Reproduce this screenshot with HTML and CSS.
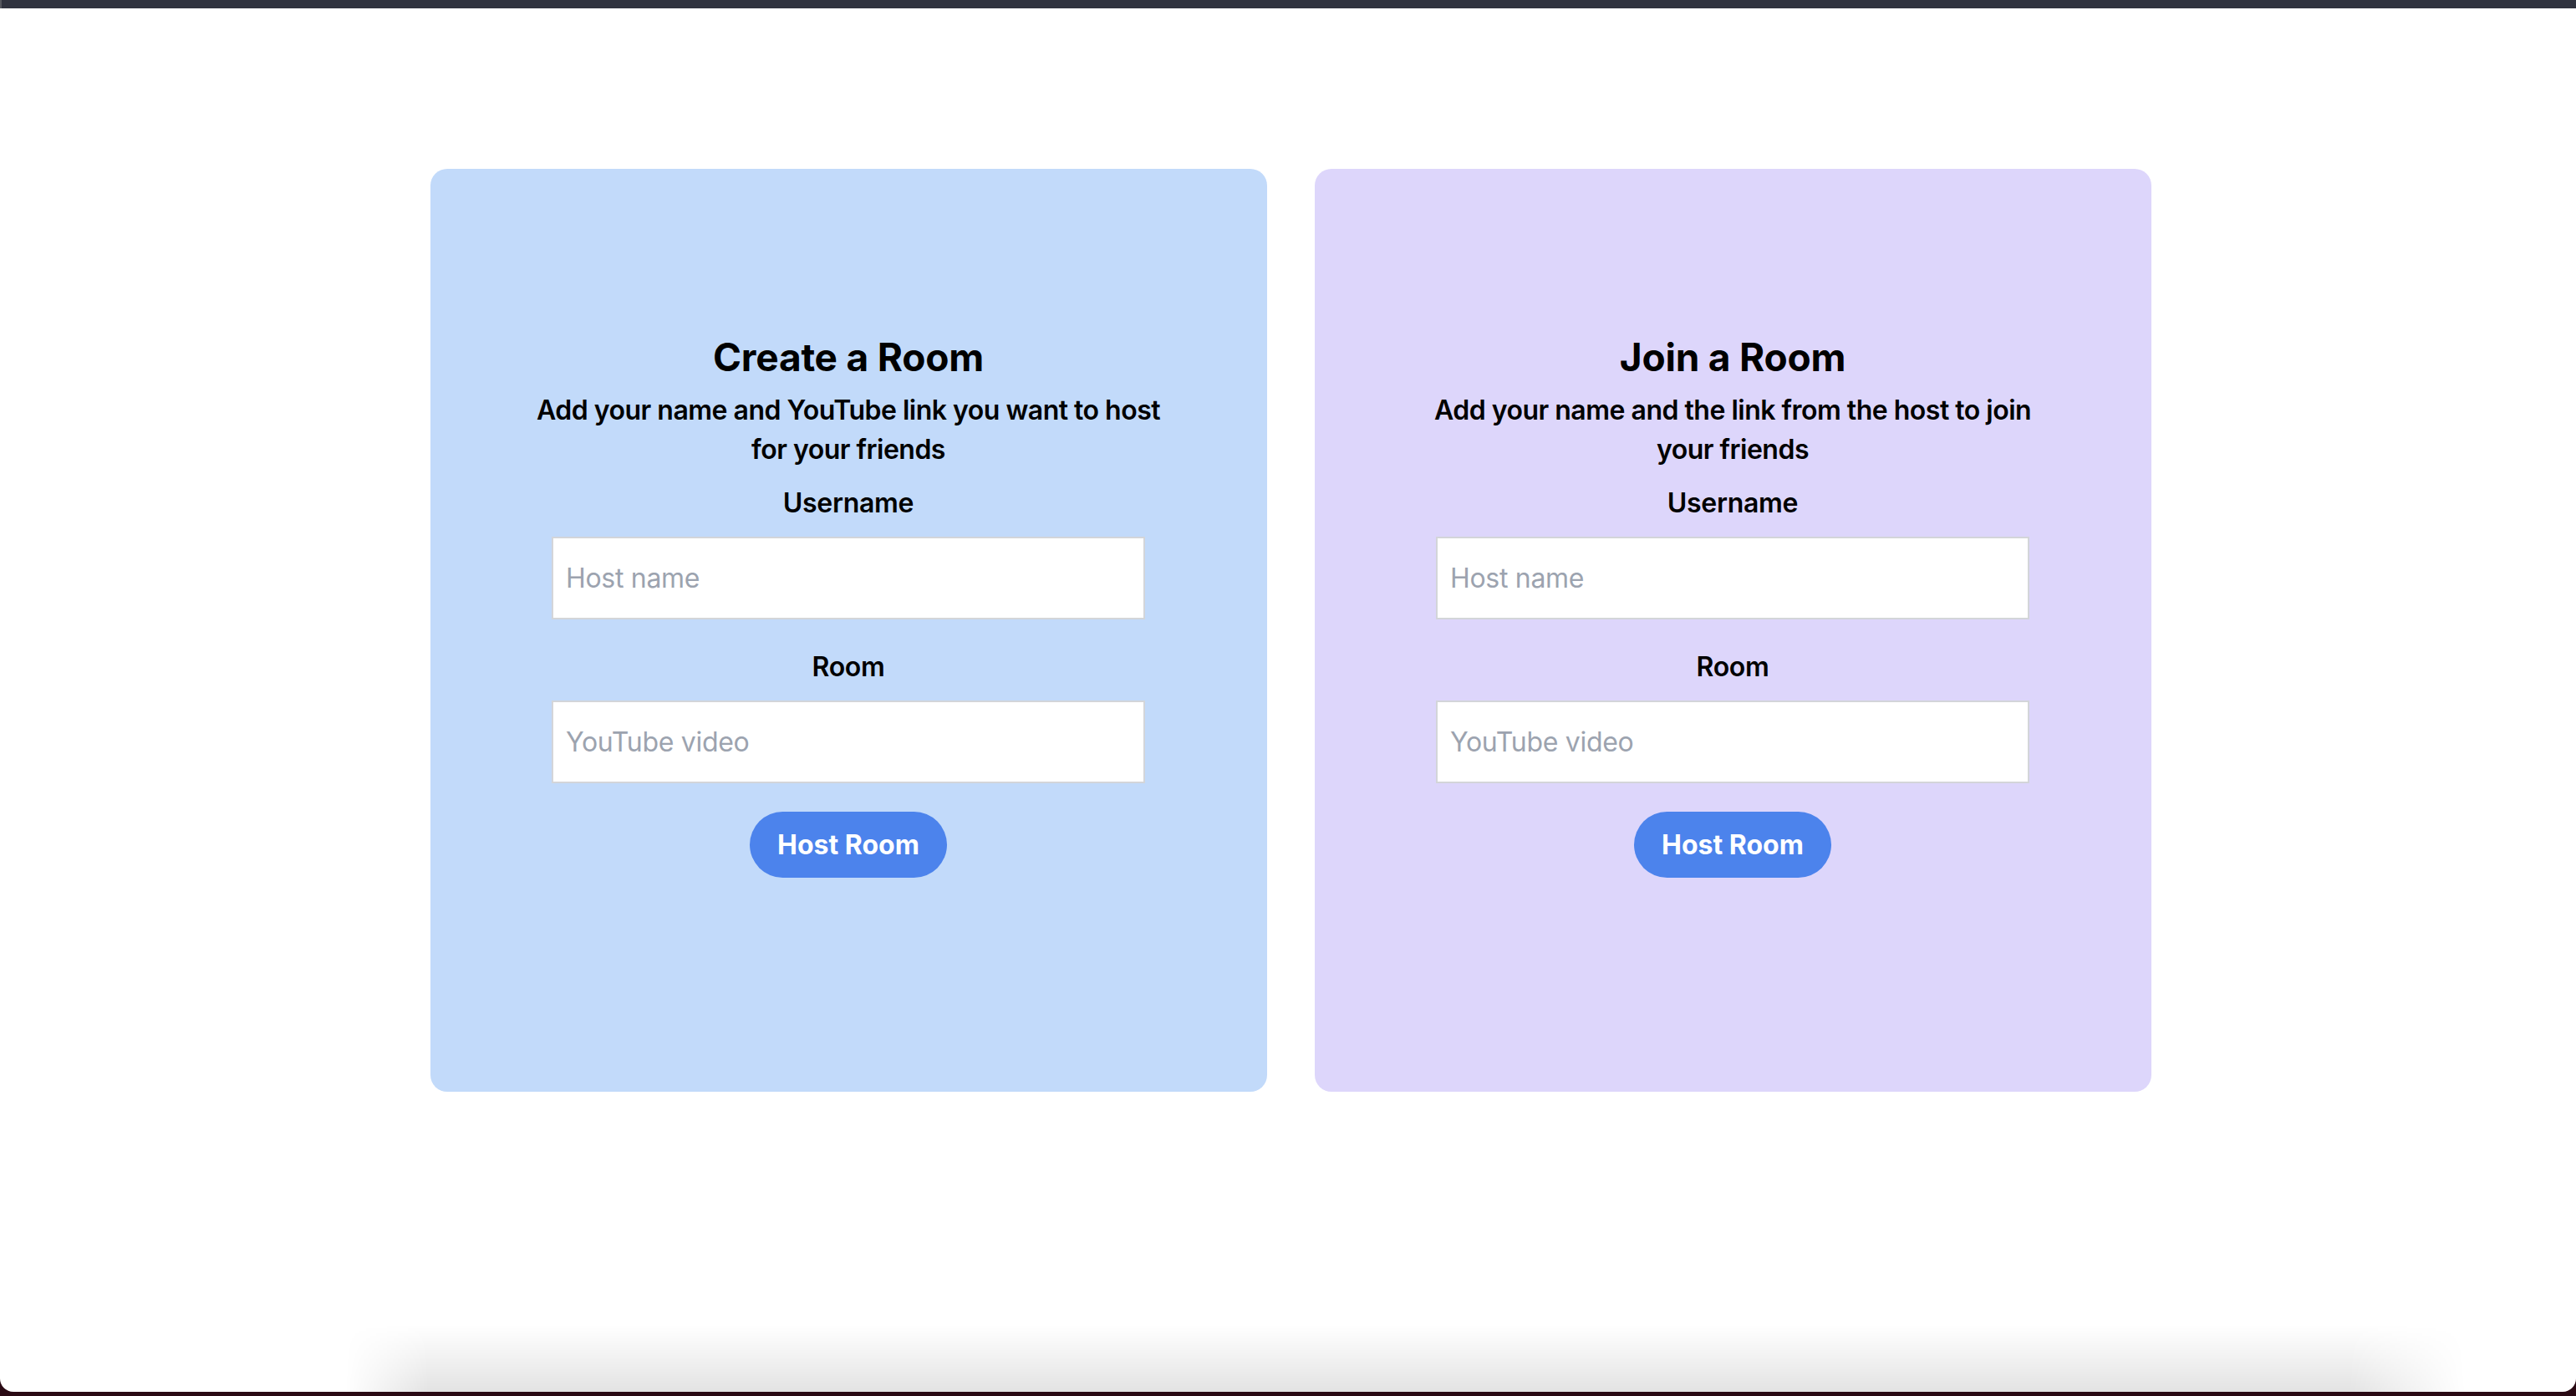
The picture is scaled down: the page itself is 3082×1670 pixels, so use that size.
FILE: index.html
```html
<!DOCTYPE html>
<html lang="en">
<head>
<meta charset="utf-8">
<title>Watch Party</title>
<link rel="stylesheet" href="styles.css">
</head>
<body>
<div class="window">
  <div class="topbar"></div>
  <main class="rooms">
    <section class="card card-create">
      <h1 class="card-title">Create a Room</h1>
      <p class="card-text">Add your name and YouTube link you want to host for your friends</p>
      <label class="field-label" for="c-user">Username</label>
      <input class="field-input" id="c-user" type="text" placeholder="Host name">
      <label class="field-label" for="c-room">Room</label>
      <input class="field-input" id="c-room" type="text" placeholder="YouTube video">
      <button class="btn" type="button">Host Room</button>
    </section>
    <section class="card card-join">
      <h1 class="card-title">Join a Room</h1>
      <p class="card-text">Add your name and the link from the host to join your friends</p>
      <label class="field-label" for="j-user">Username</label>
      <input class="field-input" id="j-user" type="text" placeholder="Host name">
      <label class="field-label" for="j-room">Room</label>
      <input class="field-input" id="j-room" type="text" placeholder="YouTube video">
      <button class="btn" type="button">Host Room</button>
    </section>
  </main>
  <div class="dock-shadow"></div>
</div>
</body>
</html>
```

FILE: styles.css
```css
* { box-sizing: border-box; }

html, body {
  margin: 0;
  padding: 0;
}

body {
  background: #2a0a14;
  width: 3082px;
  height: 1670px;
  overflow: hidden;
  font-family: "Inter", "Noto Sans", sans-serif;
  color: #000;
}

.window {
  position: relative;
  height: 1665px;
  background: #ffffff;
  border-radius: 0 0 16px 16px;
  overflow: hidden;
}

.topbar {
  height: 10px;
  background: #30333f;
  border-left: 2px solid #55575f;
}

.rooms {
  display: flex;
  justify-content: center;
  gap: 57px;
  padding-top: 192px;
  padding-left: 6px;
}

.card {
  width: 1001px;
  height: 1104px;
  border-radius: 20px;
  display: flex;
  flex-direction: column;
  align-items: center;
  padding-top: 197px;
}

.card-create { background: #c2dafa; }
.card-join { background: #ddd6fb; }

.card-title {
  margin: 0;
  font-size: 46px;
  line-height: 56px;
  font-weight: 700;
  letter-spacing: -0.2px;
}

.card-text {
  margin: 12px 0 0;
  max-width: 770px;
  text-align: center;
  font-size: 32px;
  line-height: 47px;
  font-weight: 600;
  letter-spacing: -0.5px;
}

.field-label {
  margin-top: 17px;
  font-size: 32px;
  line-height: 47px;
  font-weight: 600;
  letter-spacing: -0.3px;
}

.field-input {
  margin-top: 17px;
  width: 710px;
  height: 99px;
  border: 2px solid #d3d5d9;
  background: #ffffff;
  padding: 0 15px;
  font-family: inherit;
  font-size: 32px;
  letter-spacing: -0.3px;
  color: #111;
  outline: none;
  border-radius: 0;
}

.field-input::placeholder { color: #9ca3af; }

.field-input + .field-label { margin-top: 33px; }

.btn {
  margin-top: 34px;
  border: none;
  border-radius: 40px;
  background: #4c83ec;
  color: #ffffff;
  font-family: inherit;
  font-size: 32px;
  line-height: 47px;
  font-weight: 700;
  padding: 16px 33px;
  cursor: pointer;
}

.dock-shadow {
  position: absolute;
  left: 413px;
  right: 132px;
  bottom: 0;
  height: 80px;
  background: linear-gradient(to bottom, rgba(0,0,0,0), rgba(0,0,0,0.11));
  -webkit-mask-image: linear-gradient(to right, transparent 0, #000 100px, #000 calc(100% - 140px), transparent 100%);
  mask-image: linear-gradient(to right, transparent 0, #000 100px, #000 calc(100% - 140px), transparent 100%);
  pointer-events: none;
}
```
